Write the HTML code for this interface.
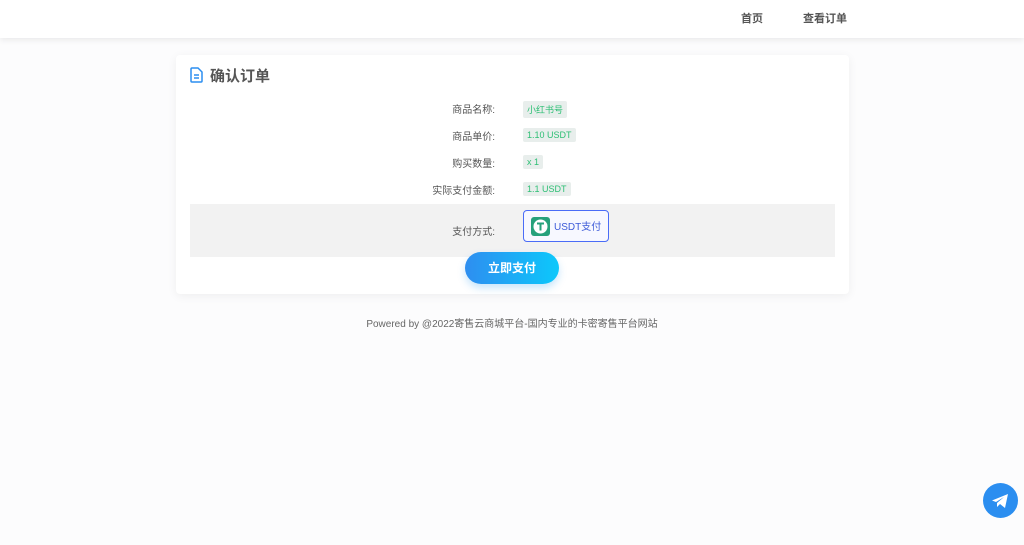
<!DOCTYPE html>
<html><head><meta charset="utf-8"><style>
*{margin:0;padding:0;box-sizing:border-box}
body{width:1024px;height:545px;background:#fcfcfd;font-family:"Liberation Sans","Noto Sans CJK SC",sans-serif;position:relative;overflow:hidden;color:#555}
.nav{position:absolute;left:0;top:0;width:1024px;height:38px;background:#fff;box-shadow:0 2px 6px rgba(0,0,0,.08)}
.nav span{position:absolute;top:10px;font-size:11px;font-weight:bold;color:#555}
.card{position:absolute;left:176px;top:55px;width:673px;height:239px;background:#fff;border-radius:4px;box-shadow:0 2px 10px rgba(0,0,0,.06)}
.title{position:absolute;left:34px;top:10px;font-size:15px;font-weight:bold;color:#555}
.row{position:absolute;left:0;width:673px;font-size:10px}
.lab{position:absolute;right:354px;color:#555}
.tag{position:absolute;left:347px;background:#e8eeec;color:#2dbf74;font-size:9px;padding:2px 4px;border-radius:2px}
.pay{position:absolute;left:14px;top:149px;width:645px;height:53px;background:#f2f2f2}
.btn{position:absolute;left:289px;top:197px;width:94px;height:32px;border-radius:16px;background:linear-gradient(90deg,#2e8ef0,#0cc8fb);color:#fff;font-size:12px;font-weight:bold;text-align:center;line-height:32px;box-shadow:0 4px 8px rgba(30,150,240,.25)}
.foot{position:absolute;left:0;width:1024px;top:315px;text-align:center;font-size:10px;color:#666}
.tg{position:absolute;left:983px;top:483px;width:35px;height:35px;border-radius:50%;background:#2b8ef0}
</style></head><body>
<div class="nav"><span style="left:741px">首页</span><span style="left:803px">查看订单</span></div>
<div class="card">
<svg style="position:absolute;left:14px;top:12px" width="13" height="16" viewBox="0 0 13 16"><path d="M2 1h6l4 4v9a1 1 0 0 1-1 1H2a1 1 0 0 1-1-1V2a1 1 0 0 1 1-1z" fill="none" stroke="#2b8ef0" stroke-width="1.5"/><path d="M4 8h5M4 11h5" stroke="#2b8ef0" stroke-width="1.4"/></svg>
<div class="title">确认订单</div>
<div class="row" style="top:46px"><span class="lab">商品名称:</span><span class="tag">小红书号</span></div>
<div class="row" style="top:73px"><span class="lab">商品单价:</span><span class="tag">1.10 USDT</span></div>
<div class="row" style="top:100px"><span class="lab">购买数量:</span><span class="tag">x 1</span></div>
<div class="row" style="top:127px"><span class="lab">实际支付金额:</span><span class="tag">1.1 USDT</span></div>
<div class="pay">
<span style="position:absolute;right:340px;top:19px;font-size:10px">支付方式:</span>
<div style="position:absolute;left:333px;top:6px;width:86px;height:32px;border:1.5px solid #4a6cf7;border-radius:4px;background:#f7f8ff">
<div style="position:absolute;left:7px;top:6px;width:19px;height:19px;background:#26a17b;border-radius:3px"><svg width="19" height="19" viewBox="0 0 19 19"><circle cx="9.5" cy="9.5" r="7" fill="#fff"/><path d="M6 6.5h7M9.5 6.5v7" stroke="#26a17b" stroke-width="2"/></svg></div>
<span style="position:absolute;left:30px;top:7px;font-size:10px;color:#3c5ad8">USDT支付</span></div>
</div>
<div class="btn">立即支付</div>
</div>
<div class="foot">Powered by @2022寄售云商城平台-国内专业的卡密寄售平台网站</div>
<div class="tg"><svg width="35" height="35" viewBox="0 0 35 35"><path d="M9 17.5l16-6.5-3 14-5-4-3 3v-4l7-6-8 5z" fill="#fff"/></svg></div>
</body></html>
